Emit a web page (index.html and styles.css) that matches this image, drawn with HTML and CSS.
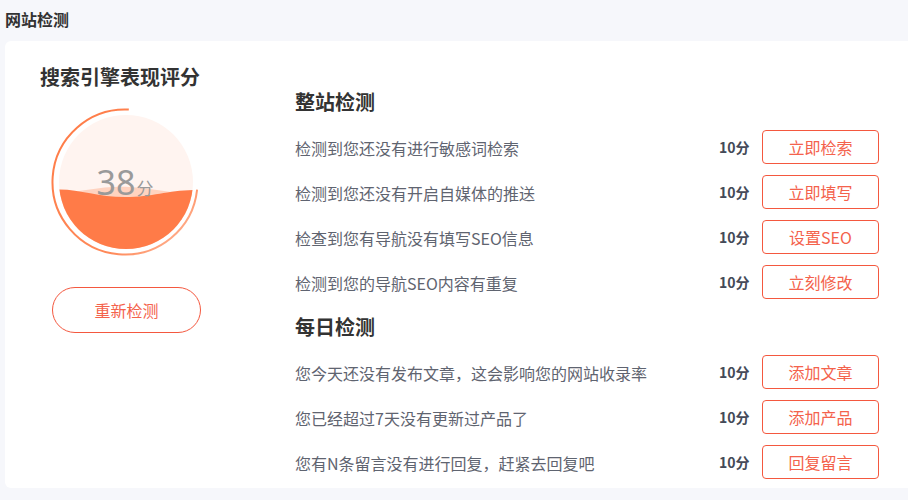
FILE: index.html
```html
<!DOCTYPE html>
<html lang="zh-CN">
<head>
<meta charset="utf-8">
<title>网站检测</title>
<link rel="stylesheet" href="styles.css">
</head>
<body>
<div class="page">
  <div class="page-title">网站检测</div>
  <div class="card">
    <div class="score-col">
      <div class="score-title">搜索引擎表现评分</div>
      <div class="gauge">
        <svg width="150" height="150" viewBox="0 0 150 150">
          <defs>
            <linearGradient id="arcg" x1="0" y1="0" x2="1" y2="1">
              <stop offset="0" stop-color="#ff7a45"/>
              <stop offset="0.7" stop-color="#ff8a5a"/>
              <stop offset="1" stop-color="#ffc2a8"/>
            </linearGradient>
            <clipPath id="inner">
              <circle cx="76" cy="75" r="67"/>
            </clipPath>
          </defs>
          <path d="M 78.8 2.6 A 72.5 72.5 0 1 0 147.1 82.6" fill="none" stroke="url(#arcg)" stroke-width="2"/>
          <circle cx="76" cy="75" r="67" fill="#fff4f0"/>
          <g clip-path="url(#inner)">
            <path d="M 0 87 C 30 86 50 78 80 80 S 125 88 150 86 L 150 150 L 0 150 Z" fill="#ffd3c0"/>
            <path d="M 0 83 C 25 80 45 90 75 90 S 120 82 150 83 L 150 150 L 0 150 Z" fill="#ff7b48"/>
          </g>
          <text x="75" y="88" text-anchor="middle" class="gauge-text"><tspan class="gauge-num">38</tspan><tspan class="gauge-unit" dx="1">分</tspan></text>
        </svg>
      </div>
      <button class="recheck">重新检测</button>
    </div>
    <div class="check-col">
      <div class="section-title">整站检测</div>
      <div class="row"><span class="row-text">检测到您还没有进行敏感词检索</span><span class="row-score">10分</span><button class="row-btn">立即检索</button></div>
      <div class="row"><span class="row-text">检测到您还没有开启自媒体的推送</span><span class="row-score">10分</span><button class="row-btn">立即填写</button></div>
      <div class="row"><span class="row-text">检查到您有导航没有填写SEO信息</span><span class="row-score">10分</span><button class="row-btn">设置SEO</button></div>
      <div class="row"><span class="row-text">检测到您的导航SEO内容有重复</span><span class="row-score">10分</span><button class="row-btn">立刻修改</button></div>
      <div class="section-title">每日检测</div>
      <div class="row"><span class="row-text">您今天还没有发布文章，这会影响您的网站收录率</span><span class="row-score">10分</span><button class="row-btn">添加文章</button></div>
      <div class="row"><span class="row-text">您已经超过7天没有更新过产品了</span><span class="row-score">10分</span><button class="row-btn">添加产品</button></div>
      <div class="row"><span class="row-text">您有N条留言没有进行回复，赶紧去回复吧</span><span class="row-score">10分</span><button class="row-btn">回复留言</button></div>
    </div>
  </div>
</div>
</body>
</html>
```
FILE: styles.css
```css
* { box-sizing: border-box; }
html, body {
  margin: 0;
  padding: 0;
  background: #f6f7fb;
  font-family: "Noto Sans CJK SC", "Noto Sans", "Liberation Sans", sans-serif;
  overflow: hidden;
}
.page {
  width: 908px;
  height: 500px;
  overflow: hidden;
}
.page-title {
  height: 41px;
  line-height: 38px;
  padding-left: 5px;
  font-size: 16px;
  font-weight: 700;
  color: #333;
}
.card {
  margin-left: 5px;
  width: 920px;
  height: 447px;
  background: #fff;
  border-radius: 6px;
  display: flex;
}
.score-col {
  width: 290px;
  padding: 24px 0 0 35px;
  display: flex;
  flex-direction: column;
  align-items: flex-start;
}
.score-title {
  font-size: 20px;
  font-weight: 700;
  color: #333;
  line-height: 24px;
}
.gauge {
  margin-top: 18px;
  margin-left: 10px;
  width: 150px;
  height: 150px;
}
.gauge svg { display: block; }
.gauge-num {
  font-family: "Noto Sans", "Liberation Sans", sans-serif;
  font-size: 34px;
  fill: #9a9a9a;
}
.gauge-unit {
  font-size: 17px;
  fill: #9a9a9a;
}
.recheck {
  margin-top: 30px;
  margin-left: 12px;
  width: 149px;
  height: 46px;
  border: 1.5px solid #f4583f;
  border-radius: 23px;
  background: #fff;
  color: #f4624c;
  font-family: inherit;
  font-size: 16px;
  padding: 0;
}
.check-col {
  width: 584px;
  padding-top: 38px;
}
.section-title {
  height: 45px;
  line-height: 45px;
  font-size: 20px;
  font-weight: 700;
  color: #333;
}
.row {
  height: 45px;
  display: flex;
  align-items: center;
}
.row-text {
  flex: 1;
  font-size: 16px;
  color: #5f6470;
  padding-top: 2px;
}
.row-score {
  width: 43px;
  font-size: 14px;
  font-weight: 700;
  color: #444a58;
}
.row-btn {
  width: 117px;
  height: 34px;
  border: 1.5px solid #f4583f;
  border-radius: 4px;
  background: #fff;
  color: #f4624c;
  font-family: inherit;
  font-size: 16px;
  padding: 0;
}
```
